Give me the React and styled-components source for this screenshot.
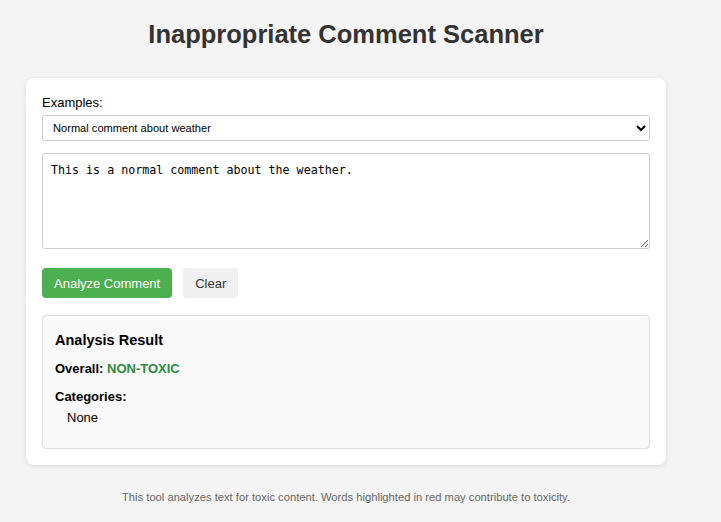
import styled, { createGlobalStyle } from "styled-components";

const GlobalStyle = createGlobalStyle`
  body {
    margin: 0;
    background: #f4f4f4;
    font-family: "Liberation Sans", Arial, sans-serif;
    color: #333;
  }
`;

const Page = styled.div`
  width: 640px;
  margin-left: 26px;
  padding-top: 17px;
`;

const Title = styled.h1`
  margin: 0 0 27px;
  text-align: center;
  font-size: 25.5px;
  line-height: 34px;
  font-weight: 700;
  color: #333;
`;

const Card = styled.div`
  background: #fff;
  border-radius: 8px;
  box-shadow: 0 1px 4px rgba(0, 0, 0, 0.12);
  padding: 17px 16px 16px;
`;

const Label = styled.label`
  display: block;
  font-size: 13px;
  line-height: 16px;
  color: #000;
  margin-bottom: 4px;
`;

const Select = styled.select`
  display: block;
  width: 100%;
  height: 26px;
  padding: 0 6px;
  font-family: "Liberation Sans", Arial, sans-serif;
  font-size: 11.1px;
  color: #000;
  background: #fff;
  border: 1px solid #ccc;
  border-radius: 3px;
  margin-bottom: 12px;
`;

const TextArea = styled.textarea`
  display: block;
  box-sizing: border-box;
  width: 100%;
  height: 96px;
  padding: 9px 8px 8px;
  font-family: "DejaVu Sans Mono", monospace;
  font-size: 11.66px;
  color: #000;
  border: 1px solid #ccc;
  border-radius: 3px;
  resize: vertical;
  margin-bottom: 19px;
`;

const Actions = styled.div`
  display: flex;
  gap: 11px;
  margin-bottom: 17px;
`;

const Button = styled.button`
  height: 30px;
  padding: 0 12px;
  border: none;
  border-radius: 4px;
  font-family: "Liberation Sans", Arial, sans-serif;
  font-size: 13px;
  cursor: pointer;
  background: ${(p) => (p.$primary ? "#4caf50" : "#f0f0f0")};
  color: ${(p) => (p.$primary ? "#fff" : "#333")};
`;

const Result = styled.div`
  background: #f9f9f9;
  border: 1px solid #ddd;
  border-radius: 4px;
  padding: 15px 12px 22px;
`;

const ResultTitle = styled.h3`
  margin: 0 0 12px;
  font-size: 14.5px;
  line-height: 18px;
  color: #000;
`;

const Row = styled.div`
  font-size: 13px;
  line-height: 16px;
  color: #000;
  margin-bottom: ${(p) => p.$gap || "12px"};
`;

const Strong = styled.b`
  font-weight: 700;
`;

const Status = styled.span`
  font-weight: 700;
  color: #2e8b3e;
`;

const CategoryItem = styled.div`
  font-size: 13px;
  line-height: 16px;
  color: #000;
  padding-left: 12px;
`;

const Footer = styled.p`
  margin: 26px 0 0;
  text-align: center;
  font-size: 11.2px;
  color: #666;
`;

export default function App() {
  return (
    <>
      <GlobalStyle />
      <Page>
        <Title>Inappropriate Comment Scanner</Title>
        <Card>
          <Label>Examples:</Label>
          <Select defaultValue="weather">
            <option value="weather">Normal comment about weather</option>
            <option value="rude">Rude comment</option>
          </Select>
          <TextArea defaultValue="This is a normal comment about the weather." />
          <Actions>
            <Button $primary>Analyze Comment</Button>
            <Button>Clear</Button>
          </Actions>
          <Result>
            <ResultTitle>Analysis Result</ResultTitle>
            <Row>
              <Strong>Overall:</Strong> <Status>NON-TOXIC</Status>
            </Row>
            <Row $gap="5px">
              <Strong>Categories:</Strong>
            </Row>
            <CategoryItem>None</CategoryItem>
          </Result>
        </Card>
        <Footer>
          This tool analyzes text for toxic content. Words highlighted in red may
          contribute to toxicity.
        </Footer>
      </Page>
    </>
  );
}
